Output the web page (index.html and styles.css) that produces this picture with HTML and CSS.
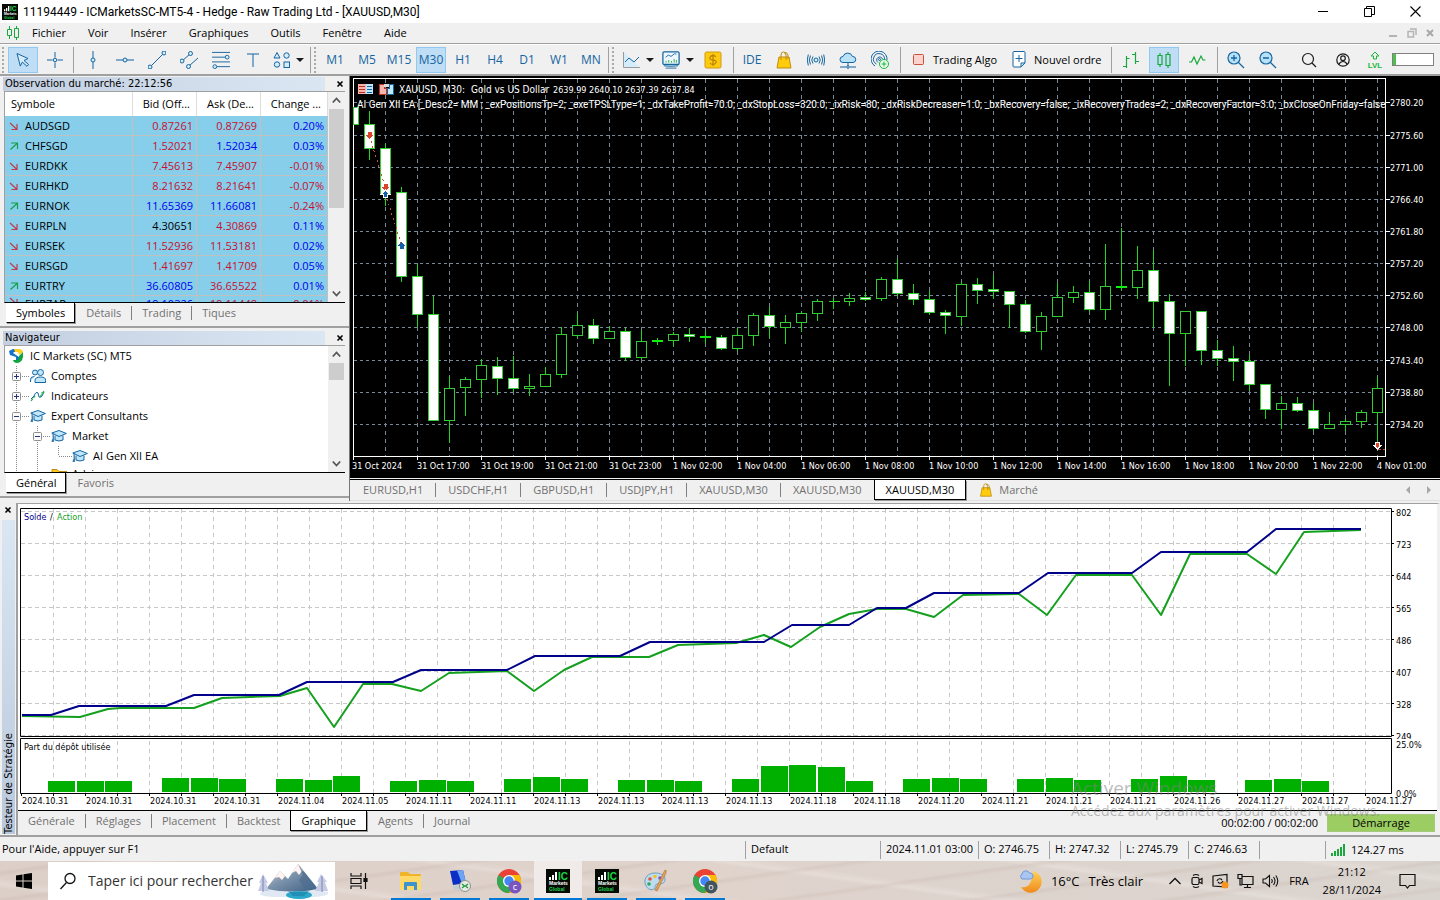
FILE: index.html
```html
<!DOCTYPE html>
<html lang="fr">
<head>
<meta charset="utf-8">
<title>11194449 - ICMarketsSC-MT5-4 - Hedge - Raw Trading Ltd - [XAUUSD,M30]</title>
<link rel="stylesheet" href="styles.css">
</head>
<body>
<svg class="defs" aria-hidden="true">
  <defs>
    <symbol id="ic-logo" viewBox="0 0 24 24">
      <rect width="24" height="24" fill="#050a05"/>
      <path d="M3 11V8h2v3zM6 11V6h2v5zM9 11V3h2v8z" fill="#fff"/>
      <text x="12" y="11" class="logo-ic">IC</text>
      <text x="3" y="16" class="logo-sm" fill="#fff">Markets</text>
      <text x="3" y="22" class="logo-sm" fill="#1fd34a">Global</text>
    </symbol>
    <symbol id="cap" viewBox="0 0 16 16">
      <path d="M4 7.500v4.500q4 2 8 0V7.500" fill="#bfe6fb" stroke="#1565a0"/>
      <path d="M.8 5 8 2.500 15.400 5.500 8 8.500z" fill="#bfe6fb" stroke="#1565a0" stroke-linejoin="round"/>
      <path d="M2 5.500v5l-1.200 3h2z" fill="#1565a0" stroke="#1565a0" stroke-width=".6"/>
    </symbol>
    <symbol id="up" viewBox="0 0 10 10"><path d="M1.500 8.500l6.500-6M2 2h6.500v6" fill="none" stroke="#14a04a" stroke-width="1.200"/></symbol>
    <symbol id="down" viewBox="0 0 10 10"><path d="M1 2l6.500 6M8 3v5.500H2.500" fill="none" stroke="#c23b4b" stroke-width="1.200"/></symbol>
    <symbol id="bag" viewBox="0 0 18 18">
      <path d="M4 6h10l2 11H2z" fill="#ffcb0a" stroke="#c08c10"/>
      <path d="M6 9V4q0-3 2.500-3T11 4v5M9 2q3-1.500 4 2v4" fill="none" stroke="#c08c10"/>
    </symbol>
    <symbol id="plus" viewBox="0 0 9 9"><rect x=".5" y=".5" width="8" height="8" rx="1" fill="#fafafa" stroke="#8e8f8f"/><path d="M2 4.500h5M4.500 2v5" stroke="#24347e"/></symbol>
    <symbol id="minus" viewBox="0 0 9 9"><rect x=".5" y=".5" width="8" height="8" rx="1" fill="#fafafa" stroke="#8e8f8f"/><path d="M2 4.500h5" stroke="#24347e"/></symbol>
    <symbol id="x" viewBox="0 0 8 8"><path d="M1.500 1.500l5 5M6.500 1.500l-5 5" stroke="#000" stroke-width="1.600"/></symbol>
    <symbol id="chev-up" viewBox="0 0 9 9"><path d="M.8 6.500l3.700-4 3.700 4" fill="none" stroke="#555" stroke-width="1.800"/></symbol>
    <symbol id="chev-down" viewBox="0 0 9 9"><path d="M.8 2.500l3.700 4 3.700-4" fill="none" stroke="#555" stroke-width="1.800"/></symbol>
    <symbol id="chrome" viewBox="0 0 26 26">
      <circle cx="13" cy="13" r="12" fill="#ea4335"/>
      <path d="M13 13L2.600 7A12 12 0 0 0 13 25l6-9z" fill="#34a853"/>
      <path d="M13 7h10.400A12 12 0 0 1 13 25l5.500-9z" fill="#fbbc05"/>
      <circle cx="13" cy="13" r="6" fill="#fff"/><circle cx="13" cy="13" r="4.700" fill="#4285f4"/>
    </symbol>
  </defs>
</svg>

<div class="app">
  <header class="titlebar">
    <svg class="i16"><use href="#ic-logo"/></svg>
    <h1 class="caption">11194449 - ICMarketsSC-MT5-4 - Hedge - Raw Trading Ltd - [XAUUSD,M30]</h1>
    <div class="winbtns">
      <button aria-label="Réduire"><svg width="11" height="11"><path d="M0 5.500h10" stroke="#000"/></svg></button>
      <button aria-label="Niveau inférieur"><svg width="11" height="11" fill="none" stroke="#000"><path d="M.5 2.500h7v8h-7zM2.500 2.500v-2h8v8h-3"/></svg></button>
      <button aria-label="Fermer"><svg width="11" height="11"><path d="M.5.500l10 10M10.500.500l-10 10" stroke="#000" stroke-width="1.100"/></svg></button>
    </div>
  </header>

  <nav class="menubar" aria-label="Menu">
    <svg class="menulogo" width="14" height="14" fill="none" stroke="#18a83c"><path d="M3.500 0v3.500M3.500 9.500V13M10.500 0v2.500M10.500 11.500V14"/><path d="M1.500 3.500h4v6h-4zM8.500 2.500h4v9h-4z"/></svg>
    <button>Fichier</button><button>Voir</button><button>Insérer</button><button>Graphiques</button><button>Outils</button><button>Fenêtre</button><button>Aide</button>
    <div class="mdibtns">
      <svg width="10" height="10"><path d="M1 8h8" stroke="#b4b4b4" stroke-width="2"/></svg>
      <svg width="10" height="10" fill="none" stroke="#b4b4b4" stroke-width="1.500"><path d="M1 3.500h5.500V9H1zM3 1h6v6"/></svg>
      <svg width="8" height="10"><path d="M1 2l6 6M7 2L1 8" stroke="#a8a8a8" stroke-width="2"/></svg>
    </div>
  </nav>

  <div class="toolbar" role="toolbar">
    <i class="grip"></i>
    <button class="tb on" aria-label="Curseur"><svg viewBox="0 0 18 18"><path d="M3 2.500l11 5-4 2 4.500 4-1.500 1.800-4.700-4.200-2 4z"/></svg></button>
    <button class="tb" aria-label="Réticule"><svg viewBox="0 0 18 18"><path d="M9 1v5.500M9 11.500V17M1 9h5.500M11.500 9H17"/><circle cx="9" cy="9" r="1.800"/></svg></button>
    <i class="sep first"></i>
    <button class="tb" aria-label="Ligne verticale"><svg viewBox="0 0 18 18"><path d="M9 0v7M9 11v7"/><circle cx="9" cy="9" r="2"/></svg></button>
    <button class="tb" aria-label="Ligne horizontale"><svg viewBox="0 0 18 18"><path d="M0 9h7M11 9h7"/><circle cx="9" cy="9" r="2"/></svg></button>
    <button class="tb" aria-label="Tendance"><svg viewBox="0 0 18 18"><path d="M3 15L15 3"/><circle cx="2" cy="16" r="2"/><circle cx="16" cy="2" r="2"/></svg></button>
    <button class="tb" aria-label="Canal"><svg viewBox="0 0 18 18"><path d="M2 10l8-7M9 15l9-8"/><circle cx="2" cy="10" r="2"/><circle cx="10.500" cy="2.500" r="2"/><circle cx="8.500" cy="15.500" r="2"/></svg></button>
    <button class="tb" aria-label="Fibonacci"><svg viewBox="0 0 19 18"><path d="M0 1h19M0 6h14M0 11h19M5 16h14"/><circle cx="16" cy="6" r="2"/><circle cx="3" cy="16" r="2"/></svg></button>
    <button class="tb" aria-label="Texte"><svg viewBox="0 0 18 18"><path d="M3 3h12M9 3v13"/></svg></button>
    <button class="tb drop" aria-label="Objets"><svg viewBox="0 0 18 18"><path d="M4 1.500L7 7H1z"/><circle cx="13.500" cy="4.500" r="2.700"/><circle cx="4" cy="13.500" r="2.700"/><rect x="11" y="11" width="5.500" height="5.500"/></svg><i class="caret"></i></button>
    <i class="sep"></i><i class="grip"></i>
    <div class="frames"><button class="tb tf">M1</button><button class="tb tf">M5</button><button class="tb tf">M15</button><button class="tb tf on">M30</button><button class="tb tf">H1</button><button class="tb tf">H4</button><button class="tb tf">D1</button><button class="tb tf">W1</button><button class="tb tf">MN</button></div>
    <i class="sep tight"></i><i class="grip"></i>
    <button class="tb drop wide" aria-label="Type de graphique"><svg viewBox="0 0 18 18"><path d="M1.500 1v15.500H18" stroke="#999"/><path d="M3 11l4-4 5 4 5-5" fill="none"/></svg><i class="caret"></i></button>
    <button class="tb drop wide" aria-label="Indicateurs"><svg viewBox="0 0 20 20"><rect x="1" y="1" width="18" height="14" rx="1.500" fill="#eef7fd" stroke-width="1.400"/><path d="M2 16.500q8 1 16 0M4 19h12"/><path d="M4 7l3-2.500 3 1.500 4-3 2 .5" fill="none"/><path d="M4.500 13v-2M7.500 13v-3M10.500 13v-2M13.500 13v-4M16 13v-3" stroke="#18a83c"/></svg><i class="caret"></i></button>
    <button class="tb" aria-label="Dollar"><svg viewBox="0 0 18 18"><rect x="1" y="1" width="16" height="16" rx="1.500" fill="#ffc90e" stroke="#d09a10"/><path d="M12 6q-1-1.500-3-1.500T6 6.500 9 9t3 2.500-3 2-3-1.500M9 3v12" fill="none" stroke="#b9860b" stroke-width="1.300"/></svg></button>
    <i class="sep"></i>
    <button class="tb ide">IDE</button>
    <button class="tb" aria-label="Marché"><svg><use href="#bag"/></svg></button>
    <button class="tb" aria-label="Signaux"><svg viewBox="0 0 18 18"><circle cx="9" cy="9" r="2"/><path d="M6 5.500q-2.500 3.500 0 7M12 5.500q2.500 3.500 0 7M3.500 4.500q-2.500 4.500 0 9M14.500 4.500q2.500 4.500 0 9M1.300 3.500q-2 5.500 0 11M16.700 3.500q2 5.500 0 11" fill="none"/></svg></button>
    <button class="tb" aria-label="VPS"><svg viewBox="0 0 18 18"><path d="M4 11.500a3 3 0 0 1 0-6 5 5 0 0 1 9.500 0 3 3 0 0 1 .5 6z" fill="#b9e2fa"/><path d="M9 12v3M1 16h6M11 16h6"/><circle cx="9" cy="16" r="1.300"/></svg></button>
    <button class="tb" aria-label="Copie"><svg viewBox="0 0 18 18"><path d="M4 15A8 8 0 1 1 16 9M5.500 13A5.500 5.500 0 1 1 13.500 8.500M7 11.500A3 3 0 1 1 11.500 8" fill="none"/><circle cx="8.500" cy="8.500" r="1"/><circle cx="13" cy="13" r="4.500" fill="#effbef" stroke="#18b83c"/><path d="M13 10.500v5M10.500 13h5" stroke="#18b83c"/></svg></button>
    <i class="sep"></i>
    <button class="tb label"><svg class="small" viewBox="0 0 12 12"><rect x=".5" y=".5" width="10" height="10" rx="1" fill="#fbd3cc" stroke="#c8503c"/></svg>Trading Algo</button>
    <button class="tb label"><svg class="doc" viewBox="0 0 14 17"><path d="M1 1.500q0-1 1-1h10q1 0 1 1V12l-4 4H2q-1 0-1-1z" fill="#fff"/><path d="M13 12H9v4zM7 4v7M3.500 7.500h7"/></svg>Nouvel ordre</button>
    <i class="sep"></i>
    <button class="tb green" aria-label="Barres"><svg viewBox="0 0 18 18"><path d="M4.500 5v12M1 15.500h3.500M4.500 7.500h3M13.500 1v12M10 3.500h3.500M13.500 10.500H17"/></svg></button>
    <button class="tb green on" aria-label="Bougies"><svg viewBox="0 0 18 18"><path d="M5 2v2.500M5 13.500V16M13 1v2.500M13 14.500V17"/><path d="M3 4.500h4v9H3zM11 3.500h4v11h-4z" fill="none"/></svg></button>
    <button class="tb green" aria-label="Ligne"><svg viewBox="0 0 18 18"><path d="M1 11h2.500L6 6l3 7 4-8 2 4h2.500" fill="none"/></svg></button>
    <i class="sep"></i>
    <button class="tb" aria-label="Zoom avant"><svg viewBox="0 0 18 18"><circle cx="7" cy="7" r="6" fill="#b9e2fa" stroke-width="1.200"/><path d="M11.500 11.500L17 17M4 7h6M7 4v6" stroke-width="1.300"/></svg></button>
    <button class="tb" aria-label="Zoom arrière"><svg viewBox="0 0 18 18"><circle cx="7" cy="7" r="6" fill="#b9e2fa" stroke-width="1.200"/><path d="M11.500 11.500L17 17M4 7h6" stroke-width="1.300"/></svg></button>
    <div class="toolend">
      <button class="tb ink" aria-label="Rechercher"><svg viewBox="0 0 18 18"><circle cx="8" cy="8" r="5.500"/><path d="M12 12l4 4"/></svg></button>
      <button class="tb ink" aria-label="Compte"><svg viewBox="0 0 18 18"><circle cx="9" cy="9" r="6.200"/><circle cx="9" cy="7.200" r="2.300"/><path d="M4.800 13.500q1.500-3 4.200-3t4.200 3"/></svg></button>
      <button class="tb lvl" aria-label="LVL"><svg viewBox="0 0 18 18"><path d="M9 1L5 5h2.500v3h3V5H13z" fill="none" stroke="#18b83c"/><text x="9" y="17">LVL</text></svg></button>
      <span class="meter"><i></i></span>
    </div>
  </div>

  <main class="workspace">
    <div class="side">
      <section class="panel">
        <div class="phead"><h2>Observation du marché: 22:12:56</h2><button aria-label="Fermer"><svg width="8" height="8"><use href="#x"/></svg></button></div>
        <div class="pbody market">
          <table>
            <colgroup><col><col class="num"><col class="num"><col class="chg"></colgroup>
            <thead><tr><th>Symbole</th><th>Bid (Off...</th><th>Ask (De...</th><th>Change ...</th></tr></thead>
            <tbody>
              <tr><td><svg><use href="#down"/></svg>AUDSGD</td><td class="r">0.87261</td><td class="r">0.87269</td><td class="b">0.20%</td></tr>
              <tr><td><svg><use href="#up"/></svg>CHFSGD</td><td class="r">1.52021</td><td class="b">1.52034</td><td class="b">0.03%</td></tr>
              <tr><td><svg><use href="#down"/></svg>EURDKK</td><td class="r">7.45613</td><td class="r">7.45907</td><td class="r">-0.01%</td></tr>
              <tr><td><svg><use href="#down"/></svg>EURHKD</td><td class="r">8.21632</td><td class="r">8.21641</td><td class="r">-0.07%</td></tr>
              <tr><td><svg><use href="#up"/></svg>EURNOK</td><td class="b">11.65369</td><td class="b">11.66081</td><td class="r">-0.24%</td></tr>
              <tr><td><svg><use href="#down"/></svg>EURPLN</td><td>4.30651</td><td class="r">4.30869</td><td class="b">0.11%</td></tr>
              <tr><td><svg><use href="#down"/></svg>EURSEK</td><td class="r">11.52936</td><td class="r">11.53181</td><td class="b">0.02%</td></tr>
              <tr><td><svg><use href="#down"/></svg>EURSGD</td><td class="r">1.41697</td><td class="r">1.41709</td><td class="b">0.05%</td></tr>
              <tr><td><svg><use href="#up"/></svg>EURTRY</td><td class="b">36.60805</td><td class="r">36.65522</td><td class="b">0.01%</td></tr>
              <tr class="cut"><td><svg><use href="#down"/></svg>EURZAR</td><td class="b">19.10326</td><td class="r">19.11448</td><td class="r">-0.01%</td></tr>
            </tbody>
          </table>
          <div class="scroll"><svg><use href="#chev-up"/></svg><i class="thumb tall"></i><svg class="end"><use href="#chev-down"/></svg></div>
        </div>
        <div class="tabs"><button class="cur">Symboles</button><button>Détails</button><button>Trading</button><button>Tiques</button></div>
      </section>
      <section class="panel">
        <div class="phead"><h2>Navigateur</h2><button aria-label="Fermer"><svg width="8" height="8"><use href="#x"/></svg></button></div>
        <div class="pbody navig">
          <ul class="tree">
            <li><svg class="ti" viewBox="0 0 16 16"><path d="M1 3l4-2h4v3H6L5 5l6 4v3q-1 2-3 1V9L2 7z" fill="#1373c8"/><path d="M6 1h5q3 0 4 3l-4 3-1-3H7z" fill="#ffcf1b"/><path d="M15 4v5q-1 6-7 6-3-1-3-3h4q2 0 2-4z" fill="#10a53c"/></svg>IC Markets (SC) MT5</li>
            <li class="l1"><svg class="ex"><use href="#plus"/></svg><i class="dots"></i><svg class="ti" viewBox="0 0 16 16" fill="#bfe6fb" stroke="#1565a0"><circle cx="5" cy="4.500" r="2.500"/><path d="M.5 14v-2.500q0-3 4-3"/><circle cx="10.500" cy="4.500" r="3"/><path d="M5 14.500v-2q0-3.500 5.500-3.500t5 3.500v2z"/></svg>Comptes</li>
            <li class="l1"><svg class="ex"><use href="#plus"/></svg><i class="dots"></i><svg class="ti" viewBox="0 0 16 16" fill="none"><path d="M1 11l3-3q2-5 4-3l1 4q1 1 3-1l2-4" stroke="#1565a0"/><path d="M1 13l4-5M10 9l4-6M11 5l4-1" stroke="#18b04a" stroke-width="1.200" stroke-dasharray="3 1"/></svg>Indicateurs</li>
            <li class="l1"><svg class="ex"><use href="#minus"/></svg><i class="dots"></i><svg class="ti"><use href="#cap"/></svg>Expert Consultants</li>
            <li class="l2"><svg class="ex"><use href="#minus"/></svg><i class="dots"></i><svg class="ti"><use href="#cap"/></svg>Market</li>
            <li class="l3"><i class="dots long"></i><svg class="ti"><use href="#cap"/></svg>AI Gen XII EA</li>
            <li class="l2 last"><svg class="ti" viewBox="0 0 16 16"><path d="M1 3.500h5l2 2h8V15H1z" fill="#ffc91a" stroke="#c08c10"/></svg>Advisors</li>
          </ul>
          <div class="scroll"><svg><use href="#chev-up"/></svg><i class="thumb"></i><svg class="end"><use href="#chev-down"/></svg></div>
        </div>
        <div class="tabs"><button class="cur">Général</button><button>Favoris</button></div>
      </section>
    </div>
    <section class="charts">
      <svg class="candles" id="candles" viewBox="350 76 1090 402" role="img" aria-label="XAUUSD, M30"></svg>
      <div class="tabs ctabs"><button>EURUSD,H1</button><button>USDCHF,H1</button><button>GBPUSD,H1</button><button>USDJPY,H1</button><button>XAUUSD,M30</button><button>XAUUSD,M30</button><button class="cur">XAUUSD,M30</button><button class="shop"><svg width="14" height="14"><use href="#bag"/></svg>Marché</button>
        <svg class="tabnav" width="26" height="8" fill="#a8a8a8"><path d="M4 0v8L0 4zM21 0v8l4-4z"/></svg>
      </div>
    </section>
  </main>

  <section class="tester">
    <div class="rail"><button aria-label="Fermer"><svg width="8" height="8"><use href="#x"/></svg></button><h2>Testeur de Stratégie</h2></div>
    <div class="tmain">
      <svg class="equity" id="equity" viewBox="18 504 1419 306" role="img" aria-label="Solde / Action"></svg>
      <div class="tabs ttabs"><button>Générale</button><button>Réglages</button><button>Placement</button><button>Backtest</button><button class="cur">Graphique</button><button>Agents</button><button>Journal</button>
        <span class="elapsed">00:02:00 / 00:02:00</span><button class="start">Démarrage</button>
      </div>
    </div>
  </section>

  <footer class="status">
    <span class="help">Pour l'Aide, appuyer sur F1</span>
    <span class="profile">Default</span><span class="when">2024.11.01 03:00</span><span class="px">O: 2746.75</span><span class="px">H: 2747.32</span><span class="px short">L: 2745.79</span><span class="px">C: 2746.63</span><span class="blank"></span>
    <span class="ping"><svg width="14" height="12" fill="#18a83c"><path d="M0 9h2v3H0zM3 7h2v5H3zM6 5h2v7H6zM9 3h2v9H9zM12 0h2v12h-2z"/></svg>124.27 ms</span>
  </footer>

  <footer class="taskbar">
    <button class="win" aria-label="Démarrer"><svg width="16" height="16"><path d="M0 2.500L6.500 1.500v6H0zM7.500 1.300L16 0v7.500H7.500zM0 8.500h6.500v6L0 13.500zM7.500 8.500H16V16l-8.500-1.300z"/></svg></button>
    <label class="search"><svg width="18" height="18" fill="none" stroke="#111" stroke-width="1.300"><circle cx="11" cy="6.500" r="5"/><path d="M7.500 10.500L1.500 17"/></svg>
      <input type="text" placeholder="Taper ici pour rechercher" aria-label="Taper ici pour rechercher">
      <svg class="scene" viewBox="0 0 72 38">
        <defs><linearGradient id="mt" x2="1" y2="1"><stop stop-color="#f1d9d2"/><stop offset=".45" stop-color="#7d94ad"/><stop offset="1" stop-color="#3c5d80"/></linearGradient></defs>
        <path d="M2 31q10-5 34-4t34 3q2 4-14 5H16Q0 34 2 31z" fill="#dfe8f3"/>
        <path d="M8 27L22 9l8 8L40 2l20 25q-25 5-52 0z" fill="url(#mt)"/>
        <path d="M22 9l-5 7 4-1 3 3 3-4zM40 2l-6 9 4-2 3 4 3-4 4 1z" fill="#fff4f0"/>
        <path d="M40 2l5 11-4 5 6 9h13z" fill="#4d6e92" opacity=".7"/>
        <ellipse cx="41" cy="33" rx="13" ry="4" fill="#2aa7c9"/><path d="M30 29q12 3 22-1l-6 6H35z" fill="#1e7fa8" opacity=".6"/>
        <path d="M5 12l-4 9h2l-3 8h11l-3-8h2zM63 12l-4 8h2l-4 9h13l-3-9h2z" fill="#c5cbe4"/><path d="M5 14v16M64 14v16" stroke="#7b82ad"/>
      </svg>
    </label>
    <button class="app-i plain" aria-label="Vue des tâches"><svg width="18" height="18" fill="none" stroke="#111" stroke-width="1.200"><path d="M1 1v3h10V1M1 17v-3h10v3M1 6.500h10v5H1zM15.500 1v16"/><path d="M14 6.500h3v3h-3z" fill="#111"/></svg></button>
    <button class="app-i" aria-label="Explorateur"><svg width="22" height="20"><path d="M0 2q0-1 1-1h7l2 2h10q1 0 1 1v5H0z" fill="#f0b429"/><path d="M0 5h21v13q0 1-1 1H1q-1 0-1-1z" fill="#ffd968"/><path d="M4 19v-7q0-1 1-1h11q1 0 1 1v7h-3v-4H7v4z" fill="#3d93cc"/></svg></button>
    <button class="app-i" aria-label="Bureau à distance"><svg width="24" height="24"><path d="M2 2l13-1 3 13-13 2z" fill="#0b2fc4"/><path d="M9 1.500l6-.5 3 13-4 .6z" fill="#6fa4f4"/><path d="M4 17l10-1 1 3-8 2z" fill="#c4ccd4"/><circle cx="17" cy="17" r="5.500" fill="#e6ebe6" stroke="#8a938a"/><path d="M14 15l2.500 2-2.500 2M20 15l-2.500 2 2.500 2" fill="none" stroke="#1f9a3b" stroke-width="1.300"/></svg></button>
    <button class="app-i" aria-label="Chrome C"><svg width="26" height="26" viewBox="0 0 26 26"><use href="#chrome"/><circle cx="19" cy="19" r="6.500" fill="#7a55c0"/><text x="19" y="22" class="badge">c</text></svg></button>
    <button class="app-i active" aria-label="MetaTrader 5"><svg class="i24"><use href="#ic-logo"/></svg></button>
    <button class="app-i" aria-label="MetaTrader 5, second"><svg class="i24"><use href="#ic-logo"/></svg></button>
    <button class="app-i" aria-label="Paint"><svg width="24" height="24"><path d="M11 4C4 4 0 9 1 14s5 8 9 6c2-1 0-4 3-5 4 0 8 0 8-5 0-4-5-6-10-6z" fill="#bcdcf0" stroke="#6ca0c4"/><circle cx="6" cy="10" r="1.800" fill="#e84e3c"/><circle cx="11" cy="7.500" r="1.800" fill="#f4c020"/><circle cx="5" cy="15" r="1.800" fill="#34a853"/><circle cx="16" cy="9" r="1.800" fill="#8a4fc0"/><path d="M21 1q2 0 1 3l-9 18-2-1z" fill="#e3a35a" stroke="#a96c2c" stroke-width=".6"/></svg></button>
    <button class="app-i" aria-label="Chrome O"><svg width="26" height="26" viewBox="0 0 26 26"><use href="#chrome"/><circle cx="19" cy="19" r="6.500" fill="#42545e"/><text x="19" y="22" class="badge">o</text></svg></button>
    <div class="tray">
      <button class="weather"><svg width="24" height="24" viewBox="0 0 24 24"><defs><linearGradient id="mn" x2="0" y2="1"><stop stop-color="#ffd25a"/><stop offset="1" stop-color="#ee8a1c"/></linearGradient></defs><path d="M15 2a11 11 0 1 1-12 16q11 2 12-16z" fill="url(#mn)"/><path d="M4 10a3 3 0 0 1 0-5 4 4 0 0 1 7.500-1A3 3 0 0 1 12.500 10z" fill="#a9c6f2" stroke="#6d97dc"/></svg><span>16°C</span><span>Très clair</span></button>
      <button class="ty" aria-label="Icônes cachées"><svg width="14" height="16" fill="none" stroke="#111" stroke-width="1.300"><path d="M1.500 11L7 5.500l5.500 5.500"/></svg></button>
      <button class="ty" aria-label="Réunion"><svg width="14" height="16" fill="none" stroke="#111" stroke-width="1.200"><rect x="2" y="4.500" width="7" height="7" rx="1.500"/><path d="M9 7l3-1.500v5L9 9M3 2.500q3-2 6 0M3 13.500q3 2 6 0"/></svg></button>
      <button class="ty" aria-label="Mise à jour"><svg width="17" height="16" fill="none" stroke="#111" stroke-width="1.200"><path d="M1 3l14-1.500V14L1 13z"/><path d="M5 8q1-3 4-2l1 1M11 8q-1 3-4 2l-1-1"/><circle cx="13" cy="12" r="3.500" fill="#f7941d" stroke="none"/></svg></button>
      <button class="ty" aria-label="Réseau"><svg width="17" height="16" fill="none" stroke="#111" stroke-width="1.200"><path d="M5 3.500h11v8H5zM10.500 11.500V14M7 14.500h7M1 1.500h4v4H1zM3 5.500V12h2"/></svg></button>
      <button class="ty" aria-label="Volume"><svg width="17" height="16" fill="none" stroke="#111" stroke-width="1.100"><path d="M1 6v4h2.500l4 3.500v-11L3.500 6zM9.500 6q1.500 2 0 4M11.500 4q3 4 0 8M13.800 2.500q4 5.500 0 11"/></svg></button>
      <span class="lang">FRA</span>
      <span class="clock"><span>21:12</span><span>28/11/2024</span></span>
      <button class="ty note" aria-label="Notifications"><svg width="17" height="17" fill="none" stroke="#111" stroke-width="1.200"><path d="M1 1.500h15v11h-5.500L8.500 15l-2-2.500H1z"/></svg></button>
    </div>
  </footer>

  <div class="activate"><strong>Activer Windows</strong><span>Accédez aux paramètres pour activer Windows.</span></div>
</div>
<script src="charts.js"></script>
</body>
</html>
```

FILE: styles.css
```css
* { box-sizing: border-box; }
body {
  margin: 0;
  background: #f0f0f0;
  color: #000;
  font: 11px/16px "Open Sans", "Noto Sans", sans-serif;
}
h1, h2, ul { margin: 0; padding: 0; font-size: inherit; font-weight: 400; }
button { margin: 0; padding: 0; border: 0; background: none; color: inherit; font: inherit; }
svg { display: block; flex: none; }
.defs { position: absolute; width: 0; height: 0; }
.app { position: relative; min-height: 100vh; display: flex; flex-direction: column; }
.i16 { width: 16px; height: 16px; }
.i24 { width: 24px; height: 24px; }
.logo-ic { font: 700 10px "Liberation Sans", sans-serif; fill: #1fd34a; }
.logo-sm { font: 700 5px "Liberation Sans", sans-serif; }

/* title and menu */
.titlebar { display: flex; align-items: center; height: 23px; padding: 0 2px; background: #fff; }
.caption { margin-left: 5px; font: 12px/16px Roboto, sans-serif; }
.winbtns { display: flex; margin-left: auto; }
.winbtns button { display: flex; justify-content: center; align-items: center; width: 46px; height: 20px; }
.menubar { display: flex; align-items: center; gap: 22px; height: 21px; padding: 0 6px; border-bottom: 1px solid #a0a0a0; }
.menulogo { margin-right: -10px; }
.mdibtns { display: flex; gap: 9px; margin-left: auto; }

/* toolbar */
.toolbar { display: flex; align-items: center; height: 32px; padding: 0 6px 0 2px; border-top: 1px solid #fff; border-bottom: 2px solid #a0a0a0; }
.grip { flex: none; width: 2px; height: 26px; margin: 0 4px 0 0; background: repeating-linear-gradient(#aaa 0 2px, #f0f0f0 2px 4px); }
.sep { flex: none; width: 1px; height: 26px; margin: 0 3px; background: #a0a0a0; }
.sep.first { margin: 0 4px 0 1px; }
.sep.tight { margin: 0 3px 0 0; }
.tb { display: flex; flex: none; align-items: center; justify-content: center; width: 30px; height: 26px; margin-right: 2px; color: #1565a0; }
.tb svg { width: 18px; height: 18px; fill: #d5ecfa; stroke: #1565a0; stroke-width: 1; }
.tb.on { background: #bfddf5; box-shadow: inset 0 0 0 1px #90c8f0; }
.tb.drop { width: 37px; gap: 5px; margin-right: 0; }
.tb.wide { width: 40px; gap: 6px; }
.caret { border: 4px solid transparent; border-top: 4px solid #1a1a1a; border-bottom: 0; }
.frames { display: flex; }
.tf, .ide { font-size: 12px; }
.tb.label { width: auto; gap: 8px; margin: 0 6px 0 9px; color: #000; }
.tb.label .small { width: 12px; height: 12px; }
.tb.label .doc { width: 14px; height: 17px; }
.tb.green svg { stroke: #18a83c; stroke-width: 1.2; }
.tb.green { margin-left: 1px; }
.toolend { display: flex; align-items: center; gap: 2px; margin-left: auto; }
.tb.ink svg { fill: none; stroke: #1a1a1a; stroke-width: 1.2; }
.tb.lvl { width: 26px; }
.lvl text { font: 700 8px "Liberation Sans", sans-serif; text-anchor: middle; fill: #18b83c; stroke: none; }
.meter { width: 42px; height: 13px; border: 1px solid #808080; background: #fff; }
.meter i { display: block; width: 3px; height: 11px; background: #4fc04f; }

/* docked panels */
.workspace { display: flex; }
.side { flex: none; width: 350px; border-right: 1px solid #777; }
.panel { height: 252px; padding: 0 4px; border-bottom: 2px solid #a0a0a0; }
.panel + .panel { height: 170px; padding-top: 2px; }
.phead { display: flex; align-items: center; height: 15px; margin-left: -1px; }
.phead h2 { flex: 1; padding-left: 2px; background: linear-gradient(90deg, #c3cfe0, #dae7f3); font: 11px/14px "DejaVu Sans Condensed", "DejaVu Sans", sans-serif; }
.phead button { padding: 0 1px 0 11px; }
.pbody { display: flex; overflow: hidden; border: 1px solid #a0a0a0; border-bottom: 1px solid #000; border-right: 0; background: #fff; }
.market { height: 212px; }
.market table { flex: 1; table-layout: fixed; border-collapse: separate; border-spacing: 0; height: 0; }
.num { width: 64px; }
.chg { width: 67px; }
.market th { height: 24px; padding: 0 6px; border-right: 1px solid #ddd; font-weight: 400; text-align: right; white-space: nowrap; }
.market th:first-child { text-align: left; }
.market td { height: 20px; padding: 0 3px; border-right: 1px solid #c0c0c0; border-bottom: 1px solid #c0c0c0; background: #87ceeb; text-align: right; }
.market td:first-child { display: flex; align-items: center; gap: 6px; padding-left: 4px; }
.market td svg { width: 10px; height: 10px; }
.market .cut td { line-height: 16px; vertical-align: top; }
.market .cut td:first-child { align-items: flex-start; }
.market .r { color: #c8102e; }
.market .b { color: #0000f0; }
.scroll { display: flex; flex: none; flex-direction: column; align-items: center; width: 17px; padding: 4px 0; background: #f0f0f0; }
.scroll svg { width: 9px; height: 9px; }
.scroll .end { margin-top: auto; }
.thumb { width: 15px; height: 17px; margin-top: 4px; background: #cdcdcd; }
.thumb.tall { height: 99px; }
.navig { height: 128px; }
.tree { flex: 1; list-style: none; }
.tree li { display: flex; align-items: center; height: 20px; padding-left: 3px; gap: 6px; white-space: nowrap; }
.tree .l1 { padding-left: 7px; gap: 0; background: repeating-linear-gradient(#888 0 1px, transparent 1px 2px) 11px 0 / 1px 100% no-repeat; }
.tree .l2 { padding-left: 28px; gap: 0; background: repeating-linear-gradient(#888 0 1px, transparent 1px 2px) 11px 0 / 1px 100% no-repeat, repeating-linear-gradient(#888 0 1px, transparent 1px 2px) 32px 0 / 1px 100% no-repeat; }
.tree .l3 { padding-left: 53px; gap: 0; background: repeating-linear-gradient(#888 0 1px, transparent 1px 2px) 11px 0 / 1px 100% no-repeat, repeating-linear-gradient(#888 0 1px, transparent 1px 2px) 32px 0 / 1px 100% no-repeat, repeating-linear-gradient(#888 0 1px, transparent 1px 2px) 53px 0 / 1px 50% no-repeat; }
.tree .last { align-items: flex-start; padding-left: 46px; line-height: 16px; }
.ti { width: 16px; height: 16px; }
li:not(:first-child) .ti { margin-right: 5px; }
.ex { width: 9px; height: 9px; }
.dots { width: 9px; height: 1px; background: repeating-linear-gradient(90deg, transparent 0 1px, #888 1px 2px); }
.dots.long { width: 14px; }

/* tab strips */
.tabs { display: flex; align-items: center; height: 20px; padding-left: 2px; color: #707070; }
.tabs button { height: 14px; padding: 0 10px; border-left: 1px solid #808080; line-height: 14px; white-space: nowrap; }
.tabs button:first-child, .tabs .cur, .tabs .cur + button, .tabs .shop { border-left-color: transparent; }
.tabs .cur { height: 20px; border: 1px solid #000; border-top: 0; background: #fff; color: #000; line-height: 18px; box-shadow: 1px 1px 0 #999; }
.panel .cur { padding: 0 9px; }

/* price chart */
.charts { flex: 1; min-width: 0; border-bottom: 1px solid #e0e0e0; }
.candles { width: 100%; background: #000; }
.candles path, .candles rect { shape-rendering: crispEdges; }
.chart-text { font: 9px "DejaVu Sans Condensed", "DejaVu Sans", sans-serif; }
.chart-text.name { font-size: 10px; }
.chart-text.params { font: 10px Roboto, sans-serif; }
.ctabs { height: 21px; margin-top: 1px; padding: 0 8px 0 0; border-top: 1px solid #000; }
.ctabs button { padding: 0 12px; }
.ctabs .cur { height: 20px; padding: 0 11px; }
.ctabs .shop { display: flex; align-items: center; gap: 6px; }
.tabnav { margin-left: auto; }

/* strategy tester */
.tester { display: flex; margin-top: 2px; border-bottom: 2px solid #a0a0a0; }
.rail { display: flex; flex: none; flex-direction: column; align-items: center; width: 16px; padding: 3px 1px 1px; gap: 6px; }
.rail h2 { flex: 1; width: 13px; background: linear-gradient(#b9c8dc, #dae7f3); font: 10px/13px "DejaVu Sans", sans-serif; writing-mode: vertical-rl; transform: rotate(180deg); white-space: nowrap; }
.tmain { flex: 1; min-width: 0; border-left: 2px solid #a0a0a0; border-top: 1px solid #a0a0a0; border-right: 3px solid #f0f0f0; }
.equity { width: 100%; background: #fff; }
.ttabs { height: 25px; padding: 0 2px 4px 0; border-top: 1px solid #000; }
.ttabs button:first-child { padding-left: 9px; }
.elapsed { margin-left: auto; padding: 4px 9px 0 0; color: #000; }
.tabs .start { width: 108px; height: 18px; margin-top: 4px; border: 1px solid #a4c87c; background: #9bcd63; color: #000; line-height: 16px; }

/* status bar */
.status { display: flex; align-items: center; height: 24px; padding: 2px 0 0 2px; }
.status span { flex: none; height: 18px; padding-left: 5px; border-left: 1px solid #a0a0a0; line-height: 16px; }
.status .help { flex: 1; padding: 0; border: 0; }
.profile { width: 135px; }
.when { width: 98px; }
.px { width: 71px; }
.px.short { width: 68px; }
.blank { width: 66px; }
.status .ping { display: flex; align-items: center; gap: 6px; width: 115px; }

/* taskbar */
.taskbar {
  display: flex; align-items: stretch; height: 40px;
  background:
    repeating-linear-gradient(172deg, transparent 0 9px, rgba(184, 164, 152, .18) 12px, transparent 16px 27px),
    repeating-linear-gradient(8deg, transparent 0 13px, rgba(255, 250, 246, .22) 17px, transparent 23px 41px),
    linear-gradient(90deg, #dccfc8, #dfd3cc 50%, #dad4cf);
}
.win { display: flex; align-items: center; justify-content: center; width: 48px; }
.search { display: flex; align-items: center; width: 287px; margin: 1px 0; padding-left: 11px; background: #fff; }
.search input { flex: 1; min-width: 0; padding: 0 0 0 11px; border: 0; outline: 0; background: none; font: 14px/20px "Open Sans", "Noto Sans", sans-serif; }
.search input::placeholder { color: #333; opacity: 1; }
.scene { width: 72px; height: 38px; margin-right: 5px; }
.app-i { display: flex; align-items: center; justify-content: center; width: 40px; margin: 0 5px 0 4px; border-bottom: 3px solid #0078d7; border-top: 3px solid transparent; }
.app-i.plain { width: 48px; margin: 0 4px 0 0; border-bottom-color: transparent; }
.app-i.active { width: 48px; margin: 0 1px 0 0; background: #f0ebe8; border-top-color: #f0ebe8; }
.badge { font: 9px "Open Sans", sans-serif; fill: #fff; text-anchor: middle; }
.tray { display: flex; align-items: center; margin-left: auto; padding-right: 24px; }
.weather { display: flex; align-items: center; gap: 9px; margin-right: 25px; font-size: 13px; }
.ty { margin-right: 8px; }
.lang { margin: 0 14px 0 2px; }
.clock { display: flex; flex-direction: column; align-items: center; line-height: 18px; }
.note { margin: 0 0 0 18px; }

/* activation overlay */
.activate { position: absolute; right: 60px; bottom: 80px; display: flex; flex-direction: column; color: rgba(130, 130, 130, .55); pointer-events: none; }
.activate strong { font: 19px/26px "Open Sans", sans-serif; }
.activate span { font: 14px/20px "Open Sans", sans-serif; }
```

FILE: charts.js
```js
function el(parent, tag, attrs, text) {
  const node = document.createElementNS("http://www.w3.org/2000/svg", tag);
  for (const key in attrs) node.setAttribute(key, attrs[key]);
  if (text !== undefined) node.textContent = text;
  parent.appendChild(node);
  return node;
}

function label(parent, x, y, text, fill, kind) {
  return el(parent, "text", { x, y, fill, class: kind ? "chart-text " + kind : "chart-text" }, text);
}

function drawCandles(svg) {
  const line = (d, stroke, dash) =>
    el(svg, "path", { d, stroke, fill: "none", "stroke-dasharray": dash || "none" });

  const prices = [[2780.2, 102.5], [2775.6, 135.5], [2771, 167.5], [2766.4, 199.5], [2761.8, 231.5],
    [2757.2, 263.5], [2752.6, 295.5], [2748, 327.5], [2743.4, 360.5], [2738.8, 392.5], [2734.2, 424.5]];
  for (const [, y] of prices) line(`M354 ${y}H1385`, "#778899", "3 3");
  for (let x = 385.5; x < 1385; x += 32) line(`M${x} 79V456`, "#778899", "4 4");
  line("M353.5 78.5H1385.5V456.5H353.5Z", "#fff");

  // top, bottom, high, low, type (1 falling, 0 rising, 2 flat)
  const bars = [
    [107.5,124.5,107.5,124.5,1],[124.5,148.5,111,160,1],[148.5,193.5,144,206,1],[192.5,276.5,187,282,1],
    [276.5,314.5,264,327,1],[314.5,420.5,296,420,1],[388.5,420.5,376,443,0],[379.5,387.5,377,416,0],
    [365.5,379.5,359,398,0],[366.5,378.5,357,395,1],[378.5,388.5,356,392,1],[386.5,388.5,374,396,0],
    [374.5,386.5,367,387,0],[334.5,374.5,327,378,0],[325.5,335.5,313,338,0],[325.5,338.5,319,344,1],
    [331.5,338.5,326,339,0],[331.5,357.5,328,361,1],[341.5,357.5,330,359,0],[340.5,341.5,338,345,2],
    [334.5,340.5,332,346,0],[334.5,336.5,328,342,1],[336.5,337.5,331,344,2],[337.5,348.5,335,350,1],
    [335.5,348.5,328,351,0],[315.5,335.5,313,346,0],[315.5,326.5,307,338,1],[322.5,327.5,315,344,0],
    [313.5,322.5,312,332,0],[301.5,313.5,299,321,0],[301.5,301.5,298,309,0],[298.5,301.5,293,306,0],
    [297.5,299.5,292,301,1],[279.5,298.5,277,301,0],[279.5,293.5,259,296,1],[293.5,299.5,284,305,1],
    [299.5,312.5,291,315,1],[312.5,315.5,310,334,1],[284.5,316.5,282,326,0],[284.5,290.5,278,304,1],
    [289.5,291.5,275,299,1],[291.5,304.5,291,328,1],[304.5,331.5,300,333,1],[316.5,331.5,312,350,0],
    [297.5,316.5,283,317,0],[292.5,297.5,286,303,0],[292.5,309.5,281,312,1],[286.5,309.5,244,320,0],
    [286.5,287.5,228,290,2],[270.5,287.5,246,299,0],[270.5,301.5,250,328,1],[301.5,333.5,294,386,1],
    [311.5,333.5,311,366,0],[311.5,350.5,311,365,1],[350.5,358.5,340,366,1],[358.5,361.5,346,381,1],
    [361.5,384.5,355,391,1],[384.5,409.5,384,419,1],[403.5,409.5,396,429,0],[403.5,410.5,397,412,1],
    [410.5,428.5,403,431,1],[424.5,428.5,412,429,0],[421.5,424.5,419,431,0],[412.5,421.5,410,428,0],
    [388.5,412.5,377,441,0]];
  bars.forEach(([top, bottom, high, low, type], i) => {
    const x = 353.5 + 16 * i;
    line(`M${x} ${high}V${top}M${x} ${bottom}V${low}`, "#22d422");
    const left = i ? x - 5 : x;
    if (top === bottom) line(`M${left} ${top}H${x + 6}`, "#32cd32");
    else el(svg, "rect", { x: left, y: top, width: x + 5 - left, height: bottom - top,
      fill: type === 1 ? "#fff" : "#000", stroke: type === 2 ? "#10f010" : "#32cd32" });
  });

  line("M369.5 136L385.500 188M385.500 194L401.500 245", "#c8502c", "2 3");
  line("M1378 449.500h7", "#c8502c", "3 2");
  const arrow = (x, y, dir, fill, edge) =>
    el(svg, "path", { d: `M${x} ${y + 4 * dir}l-4 ${-4 * dir}h2v${-3 * dir}h4v${3 * dir}h2z`,
      fill, stroke: edge || "none" });
  arrow(369.5, 135, 1, "#d8452a");
  arrow(385.5, 187, 1, "#d8452a");
  arrow(385.5, 194, -1, "#1560a8", "#fff");
  arrow(401.5, 246, -1, "#1560a8");
  arrow(1377.5, 445, 1, "#d8452a", "#fff");

  for (const [p, y] of prices) {
    line(`M1386 ${y}h4`, "#fff");
    label(svg, 1390, y + 3.5, p.toFixed(2), "#fff");
  }
  ["31 Oct 2024", "31 Oct 17:00", "31 Oct 19:00", "31 Oct 21:00", "31 Oct 23:00", "1 Nov 02:00",
    "1 Nov 04:00", "1 Nov 06:00", "1 Nov 08:00", "1 Nov 10:00", "1 Nov 12:00", "1 Nov 14:00",
    "1 Nov 16:00", "1 Nov 18:00", "1 Nov 20:00", "1 Nov 22:00", "4 Nov 01:00"].forEach((t, i) => {
    line(`M${353.5 + 64 * i} 457v3`, "#fff");
    label(svg, 352 + 64 * i + (i ? 1 : 0), 469, t, "#fff");
  });

  el(svg, "path", { d: "M358 84h8v10h-8z", fill: "#f6b4ac" });
  el(svg, "path", { d: "M366 84h7v10h-7z", fill: "#bfe6fb" });
  line("M359 86.500h6M359 89.500h6M359 92.500h6", "#c03020");
  line("M367 86.500h5M367 89.500h5M367 92.500h5", "#1565a0");
  el(svg, "path", { d: "M379.500 84.500h5v4h2v6h-7z", fill: "#f6b4ac", stroke: "#c03020" });
  el(svg, "path", { d: "M387.500 94.500v-6h2v-4h4v10z", fill: "#bfe6fb", stroke: "#1565a0" });
  el(svg, "path", { d: "M384 84h5v3h-5z", fill: "#ddd" });
  label(svg, 399, 93, "XAUUSD, M30:", "#fff", "name");
  label(svg, 471, 93, "Gold vs US Dollar", "#fff", "name");
  label(svg, 553, 93, "2639.99 2640.10 2637.39 2637.84", "#fff");
  const clip = el(svg, "clipPath", { id: "plot" });
  el(clip, "rect", { x: 354, y: 79, width: 1031, height: 378 });
  const ea = label(svg, 357, 108, "AI Gen XII EA [_Desc2= MM ; _exPositionsTp=2; _exeTPSLType=1; _dxTakeProfit=70.0; _dxStopLoss=320.0; _ixRisk=80; _dxRiskDecreaser=1.0; _bxRecovery=false; _ixRecoveryTrades=2; _dxRecoveryFactor=3.0; _bxCloseOnFriday=false; _ix", "#fff", "params");
  ea.setAttribute("clip-path", "url(#plot)");
}

function drawEquity(svg) {
  const line = (d, stroke, dash) =>
    el(svg, "path", { d, stroke, fill: "none", "stroke-dasharray": dash || "none" });
  for (let y = 511.5; y < 736; y += 32) line(`M21 ${y}H1391`, "#c8c8c8", "4 3");
  for (let x = 53.5; x < 1391; x += 32) line(`M${x} 509V793`, "#c8c8c8", "4 4");

  const tops = { 0: 781, 1: 781, 2: 781, 4: 778, 5: 778, 6: 779, 8: 779, 9: 780, 10: 776, 12: 781, 13: 780,
    14: 781, 16: 779, 17: 777, 18: 779, 20: 780, 21: 780, 22: 781, 24: 779, 25: 766, 26: 765, 27: 767,
    28: 781, 30: 779, 31: 778, 32: 779, 34: 779, 35: 778, 36: 780, 38: 779, 39: 776, 40: 780, 42: 780,
    43: 779, 44: 781 };
  for (const i in tops) {
    el(svg, "rect", { x: Math.round(48 + 28.5 * i), y: tops[i], width: 27, height: 792 - tops[i], fill: "#00b000" });
  }

  const curve = (points, stroke) =>
    el(svg, "polyline", { points, stroke, fill: "none", "stroke-width": 2, "stroke-linejoin": "round" });
  curve("22,716 80,717 108,709 120,708 194,708 222,698 250,697 280,696 307,688 334,727 363,684 392,684 421,691 449,673 507,671 534,691 564,670 592,657 649,657 678,645 736,643 764,635 791,647 820,627 849,614 877,609 906,609 934,617 963,595 1019,594 1047,615 1076,575 1132,575 1161,615 1190,554 1247,554 1276,574 1304,532 1361,530", "#14a01e");
  curve("22,715 51,715 79,706 166,706 194,695 279,695 307,682 393,682 421,670 507,670 535,656 620,656 650,642 764,642 792,625 849,625 877,608 906,608 934,593 1019,593 1048,573 1132,573 1161,552 1247,552 1276,529 1361,529", "#00008b");

  line("M20.500 508.500H1391.500V736.500H20.500ZM20.500 738.500H1391.500V793.500H20.500Z", "#000");
  ["802", "723", "644", "565", "486", "407", "328", "249"].forEach((t, i) => {
    const y = 511.5 + 32 * i;
    line(`M1392 ${y}h2`, "#000");
    label(svg, 1396, y + 4, t, "#000");
  });
  el(svg, "rect", { x: 1394, y: 739, width: 40, height: 10, fill: "#fff" });
  label(svg, 1396, 748, "25.0%", "#000");
  label(svg, 1396, 797, "0.0%", "#000");
  label(svg, 24, 520, "Solde", "#00008b");
  label(svg, 50, 520, "/", "#000");
  label(svg, 57, 520, "Action", "#14a01e");
  label(svg, 24, 750, "Part du dépôt utilisée", "#000");
  for (let x = 21.5; x < 1391; x += 32) line(`M${x} 794v2`, "#000");
  ["10.31", "10.31", "10.31", "10.31", "11.04", "11.05", "11.11", "11.11", "11.13", "11.13", "11.13",
    "11.13", "11.18", "11.18", "11.20", "11.21", "11.21", "11.21", "11.26", "11.27", "11.27", "11.27"]
    .forEach((t, i) => label(svg, 22 + 64 * i, 804, "2024." + t, "#000"));
}

drawCandles(document.getElementById("candles"));
drawEquity(document.getElementById("equity"));
```
